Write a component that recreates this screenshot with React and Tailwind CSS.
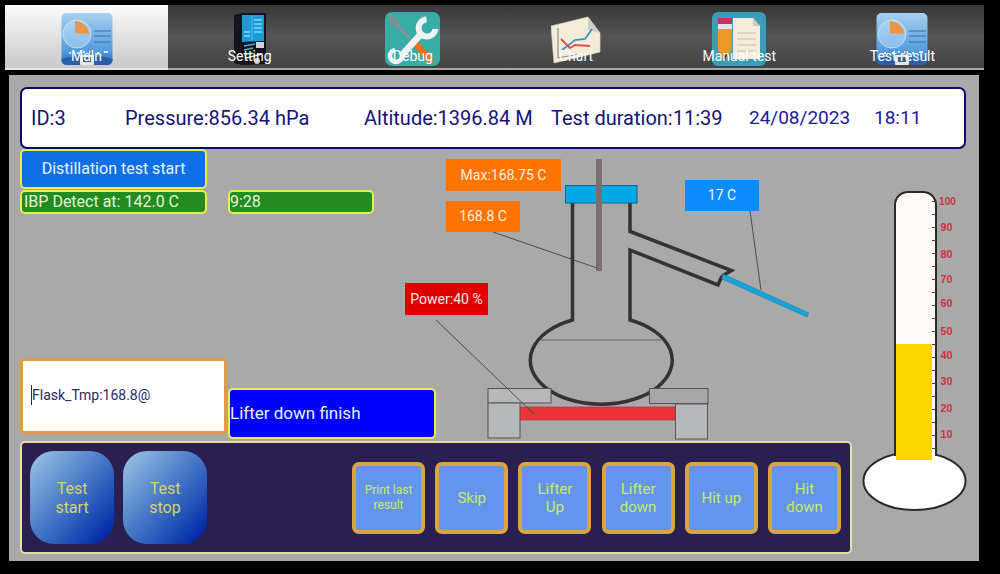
import React from "react";

function ReportIcon({ id }) {
  return (
    <svg viewBox="0 0 52 54" className="w-[52px] h-[54px] blur-[0.4px]">
      <defs>
        <linearGradient id={id} x1="0" y1="0" x2="0" y2="1">
          <stop offset="0" stopColor="#a9d0ee" />
          <stop offset="0.75" stopColor="#4f9be0" />
          <stop offset="1" stopColor="#2d5fa8" />
        </linearGradient>
      </defs>
      <rect x="0.5" y="1" width="51" height="52" rx="5" fill={`url(#${id})`} />
      <path d="M0.5 47 Q14 42 26 47 Q40 42 51.5 47 V48 a5 5 0 0 1 -5 5 H5.500 a5 5 0 0 1 -5 -5Z" fill="#2d5fa8" />
      <circle cx="16" cy="22" r="14" fill="#c5e2f6" fillOpacity="0.45" stroke="#d8ecfa" strokeOpacity="0.7" />
      <path d="M14 9 L14 21 L28 22 Q27 11 14 9Z" fill="#ef9440" />
      <path d="M33 19H50M33 24H50M33 30H50" stroke="#3d6ea8" strokeWidth="1.200" />
      <path d="M8 41h2M16 41h2M22 40h2M28 40h4M36 41h2M43 40h4" stroke="#d8ecfa" strokeWidth="2" />
      <path d="M29 40h2" stroke="#ef9440" strokeWidth="2" />
      <rect x="19" y="43" width="14" height="10" rx="1" fill="#dfe6ee" />
      <rect x="22" y="45" width="8" height="5" fill="#51606e" />
    </svg>
  );
}

function SettingIcon() {
  return (
    <svg viewBox="0 0 34 54" className="w-[34px] h-[54px] blur-[0.3px]">
      <path d="M1 3 L10 1 H33 V52 L9 53 L1 51Z" fill="#12151d" />
      <path d="M9 3 H31 V29 L9 30Z" fill="#1a9bd8" />
      <path d="M19 4 V29" stroke="#5fc4ec" strokeWidth="0.800" />
      <path d="M21 8h8M21 12h8M21 16h8M21 20h8M11 20h6M11 24h6" stroke="#8ad6f2" strokeWidth="1.300" />
      <path d="M11 34 L22 32M11 38 L20 36M11 43 L20 41" stroke="#4fa9d8" strokeWidth="1.600" />
      <rect x="23" y="30" width="8" height="6" fill="#c9d2da" />
      <path d="M13 46 L29 42" stroke="#dfe6ee" strokeWidth="1.400" />
      <circle cx="24" cy="49" r="3" fill="#c9d2da" />
    </svg>
  );
}

function DebugIcon() {
  return (
    <svg viewBox="0 0 55 54" className="w-[55px] h-[54px] blur-[0.3px]">
      <rect x="0" y="0" width="55" height="54" rx="7" fill="#38aca6" />
      <path d="M7 7 L12 13" stroke="#7c8f93" strokeWidth="6" strokeLinecap="round" />
      <path d="M11 12 L29 31" stroke="#84939a" strokeWidth="3.200" />
      <path d="M29 30 L47 50" stroke="#e8701e" strokeWidth="6.500" />
      <path d="M36 22 L16 44" stroke="#f1f3f3" strokeWidth="6.500" />
      <path d="M41.500 7.500 A8.500 8.500 0 1 0 50.500 17" fill="none" stroke="#f1f3f3" strokeWidth="6" />
      <path d="M17 44 A6 6 0 1 1 10 38" fill="none" stroke="#f1f3f3" strokeWidth="4.500" />
    </svg>
  );
}

function ChartIcon() {
  return (
    <svg viewBox="0 0 50 48" className="w-[50px] h-[48px] blur-[0.3px]">
      <path d="M0 10 L37 1 L49 17 V36 L3 47Z" fill="#f3ecd9" stroke="#d9d2bd" strokeWidth="0.700" />
      <path d="M37 1 L37 14 L49 17Z" fill="#cfcfc6" />
      <path d="M7 12 V42 M7 42 L28 38" stroke="#8a8f98" strokeWidth="1.200" />
      <path d="M11 34 L24 24 L34 23 L41 13" fill="none" stroke="#3d8fc4" strokeWidth="1.800" />
      <path d="M10 23 L19 32 L24 29 L39 30" fill="none" stroke="#d8504a" strokeWidth="1.800" />
    </svg>
  );
}

function ManualIcon() {
  return (
    <svg viewBox="0 0 54 54" className="w-[54px] h-[54px] blur-[0.3px]">
      <rect x="0" y="0" width="54" height="54" rx="6" fill="#3a9db8" />
      <path d="M21 6 H41 L48 14 V47 H21Z" fill="#f3ecdb" />
      <path d="M41 6 V14 H48Z" fill="#c9c9c0" />
      <path d="M25 21H44M25 27H44M25 33H44M25 39H44" stroke="#c6bea8" strokeWidth="1" />
      <rect x="6" y="6" width="14" height="6" fill="#c93060" />
      <rect x="6" y="12" width="14" height="5" fill="#e4e4e4" />
      <path d="M6 17 H20 V38 L13 49 L6 38Z" fill="#ea9a24" />
      <path d="M10.500 42 L13 49 L15.500 42Z" fill="#3b3b3b" />
    </svg>
  );
}

function Tab({ label, children, active }) {
  return (
    <div
      className={
        active
          ? "relative w-[163px] h-full flex justify-center pt-[7px] bg-gradient-to-b from-[#fbfbfb] to-[#c9c9c9] border-b-2 border-[#e6e6e6]"
          : "relative flex-1 h-full flex justify-center pt-[7px] bg-gradient-to-b from-[#383838] via-[#555555] to-[#444444] border-b-2 border-[#a8a8a8]"
      }
    >
      {children}
      <span className="absolute left-0 right-0 top-[42px] text-center text-[14px] leading-[18px] text-white">{label}</span>
    </div>
  );
}

function Diagram() {
  const dark = "#333333";
  return (
    <svg viewBox="20 149 832 292" className="absolute left-0 top-0 w-[832px] h-[292px]">
      <path d="M572.500 203 V320 A71 44 0 1 0 630 320 V250 L718 285 L722 276" fill="none" stroke={dark} strokeWidth="3.500" />
      <path d="M630 203 V231.500 L731.500 270.500 L722 276" fill="none" stroke={dark} strokeWidth="3.500" />
      <path d="M541 340 H661" stroke="#666666" strokeWidth="1" />
      <rect x="565.500" y="185.500" width="71.500" height="17.500" fill="#00a8e8" stroke="#17618a" />
      <rect x="596" y="159" width="6" height="112" rx="1" fill="#7b6e6e" />
      <path d="M723 274 L809 313 L807 317 L722 279Z" fill="#18a3dc" stroke="#157aa8" strokeWidth="0.500" />
      <rect x="488" y="388.500" width="63" height="14.500" fill="#b6b8ba" stroke="#555555" />
      <rect x="649.500" y="388.500" width="58.500" height="15" fill="#a5a7aa" stroke="#555555" />
      <rect x="488" y="403" width="32" height="35" fill="#b6b8ba" stroke="#555555" />
      <rect x="675.500" y="404" width="32" height="35" fill="#b6b8ba" stroke="#555555" />
      <rect x="520.500" y="407" width="154.500" height="13" fill="#ee3338" stroke="#a03a40" strokeWidth="0.700" />
      <path d="M493 232 L597 268 M750 211 L761 290 M436 320 L534 414" stroke="#444444" strokeWidth="0.900" fill="none" />
    </svg>
  );
}

function Thermometer() {
  const labels = [
    ["100", 205],
    ["90", 231],
    ["80", 258],
    ["70", 283],
    ["60", 307],
    ["50", 335],
    ["40", 359],
    ["30", 385],
    ["20", 412],
    ["10", 438],
  ];
  const ticks = Array.from({ length: 20 }, (_, i) => 201.500 + i * 13);
  return (
    <svg viewBox="852 149 114 404" className="w-[114px] h-[404px] overflow-visible">
      <ellipse cx="914.500" cy="481" rx="51" ry="29" fill="#ffffff" stroke="#2a2a2a" strokeWidth="2" />
      <path d="M895 456 V205 A13 13 0 0 1 908 192 H923 A13 13 0 0 1 936 205 V456" fill="#fff9f8" stroke="#2a2a2a" strokeWidth="2" />
      <rect x="896" y="450" width="39" height="14" fill="#ffffff" />
      <rect x="896" y="344" width="36" height="116" fill="#ffd500" />
      {ticks.map((y) => (
        <path key={y} d={`M932 ${y} H936`} stroke="#444444" strokeWidth="1" />
      ))}
      {labels.map(([t, y]) => (
        <text key={t} x={t === "100" ? 939 : 940.500} y={y} fontSize="11.500" fontWeight="700" fill="#d1303f" fontFamily="'Liberation Sans', sans-serif" textLength={t === "100" ? 17 : 12} lengthAdjust="spacingAndGlyphs">
          {t}
        </text>
      ))}
    </svg>
  );
}

function BlueBtn({ children, small }) {
  return (
    <button className={`w-[73px] h-[72px] bg-[#6495ed] border-[4px] border-[#d9a53c] rounded-[7px] text-[#c9ea5f] flex items-center justify-center text-center ${small ? "text-[12px] leading-[15px]" : "text-[15px] leading-[18px]"}`}>
      {children}
    </button>
  );
}

function RoundBtn({ children }) {
  return (
    <button className="w-[84px] h-[93px] rounded-[24px] bg-gradient-to-br from-[#9fc7e4] to-[#0606a0] text-[#d9d265] text-[16px] leading-[19px] text-center">
      {children}
    </button>
  );
}

export default function App() {
  return (
    <div className="w-[1000px] h-[574px] bg-black overflow-hidden font-['Roboto',sans-serif]">
      <nav className="ml-[5px] pt-[5px] w-[979px] h-[70px] flex">
        <Tab label="Main" active>
          <ReportIcon id="rep1" />
        </Tab>
        <Tab label="Setting">
          <SettingIcon />
        </Tab>
        <Tab label="Debug">
          <DebugIcon />
        </Tab>
        <Tab label="Chart">
          <div className="mt-[4px]">
            <ChartIcon />
          </div>
        </Tab>
        <Tab label="Manual test">
          <ManualIcon />
        </Tab>
        <Tab label="Test result">
          <ReportIcon id="rep2" />
        </Tab>
      </nav>

      <main className="mt-[5px] ml-[9px] w-[970px] h-[486px] bg-[#a9a9a9] pl-[11px] pt-[12px]">
        <header className="w-[946px] h-[62px] bg-white border-[2px] border-[#0d0a6e] rounded-[7px] flex items-center pl-[9px] text-[20px] text-[#16127a] whitespace-nowrap">
          <span className="w-[94px]">ID:3</span>
          <span className="w-[239px]">Pressure:856.34 hPa</span>
          <span className="w-[187px]">Altitude:1396.84 M</span>
          <span className="w-[198px]">Test duration:11:39</span>
          <span className="w-[125px] text-[#1d1a9c] text-[19px]">24/08/2023</span>
          <span className="text-[#1d1a9c] text-[19px]">18:11</span>
        </header>

        <div className="flex">
          <div className="w-[832px]">
            <section className="relative h-[292px] flex flex-col">
              <Diagram />
              <div className="relative mt-0 w-[187px] h-[40px] bg-[#0f6fe6] border-[2px] border-[#e8ee50] rounded-[5px] flex items-center justify-center text-[16px] text-[#e4f4ff]">
                Distillation test start
              </div>
              <div className="relative mt-[1px] flex gap-[21px] text-[16px] text-[#e6f6d0] leading-[20px]">
                <div className="w-[187px] h-[24px] bg-[#228b22] border-[2px] border-[#e8ee50] rounded-[5px] flex items-center pl-[2px] whitespace-nowrap">
                  IBP Detect at: 142.0 C
                </div>
                <div className="w-[146px] h-[24px] bg-[#228b22] border-[2px] border-[#e8ee50] rounded-[5px] flex items-center">
                  9:28
                </div>
              </div>
              <div className="relative mt-auto flex items-end gap-[1px] pb-[2px]">
                <div className="w-[207px] h-[76px] mb-[5px] bg-white border-[3px] border-[#e19a48] rounded-[3px] flex items-center pl-[8px] pb-[2px] text-[14px] text-[#2b2a5e]">
                  <span className="w-[1px] h-[20px] bg-[#2b2a5e]" />
                  Flask_Tmp:168.8@
                </div>
                <div className="w-[208px] h-[51px] bg-[#0000ff] border-[2px] border-[#ecec55] rounded-[5px] flex items-center text-[17px] text-[#e6f0ff] whitespace-nowrap">
                  Lifter down finish
                </div>
              </div>
              <div className="absolute left-[426px] top-[10px] w-[115px] h-[32px] bg-[#ff7300] text-[#fff0dc] text-[14px] flex items-center justify-center">Max:168.75 C</div>
              <div className="absolute left-[426px] top-[52px] w-[74px] h-[31px] bg-[#ff7300] text-[#fff0dc] text-[14px] flex items-center justify-center">168.8 C</div>
              <div className="absolute left-[665px] top-[31px] w-[74px] h-[31px] bg-[#0a8cff] text-[#f0f8ff] text-[14px] flex items-center justify-center">17 C</div>
              <div className="absolute left-[385px] top-[134px] w-[83px] h-[32px] bg-[#e00000] text-[#ffe8e8] text-[14px] flex items-center justify-center">Power:40 %</div>
            </section>

            <section className="h-[113px] bg-[#2a2050] border-[2px] border-[#e6dfa0] rounded-[5px] flex items-center pl-[8px] pr-[9px] gap-[9px]">
              <RoundBtn>
                Test
                <br />
                start
              </RoundBtn>
              <RoundBtn>
                Test
                <br />
                stop
              </RoundBtn>
              <div className="ml-auto flex gap-[10.200px]">
                <BlueBtn small>
                  Print last
                  <br />
                  result
                </BlueBtn>
                <BlueBtn>Skip</BlueBtn>
                <BlueBtn>
                  Lifter
                  <br />
                  Up
                </BlueBtn>
                <BlueBtn>
                  Lifter
                  <br />
                  down
                </BlueBtn>
                <BlueBtn>Hit up</BlueBtn>
                <BlueBtn>
                  Hit
                  <br />
                  down
                </BlueBtn>
              </div>
            </section>
          </div>
          <Thermometer />
        </div>
      </main>
    </div>
  );
}
